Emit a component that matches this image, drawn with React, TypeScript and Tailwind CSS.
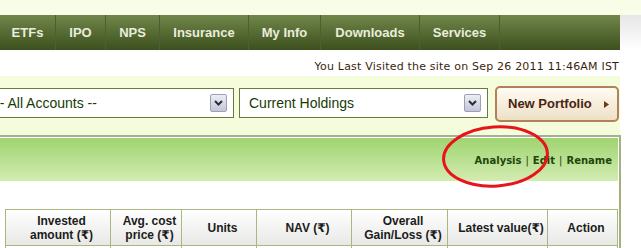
const navItems: { label: string; w: string }[] = [
  { label: "ETFs", w: "w-[56px]" },
  { label: "IPO", w: "w-[50px]" },
  { label: "NPS", w: "w-[54px]" },
  { label: "Insurance", w: "w-[89px]" },
  { label: "My Info", w: "w-[72px]" },
  { label: "Downloads", w: "w-[99px]" },
  { label: "Services", w: "w-[80px]" },
];

const columns: { w: string; lines: string[] }[] = [
  { w: "w-[105px]", lines: ["Invested", "amount (₹)"] },
  { w: "w-[71px]", lines: ["Avg. cost", "price (₹)"] },
  { w: "w-[75px]", lines: ["Units"] },
  { w: "w-[95px]", lines: ["NAV (₹)"] },
  { w: "w-[96px]", lines: ["Overall", "Gain/Loss (₹)"] },
  { w: "w-[100px]", lines: ["Latest value(₹)"] },
  { w: "w-[70px]", lines: ["Action"] },
];

function SelectArrow() {
  return (
    <span className="w-[17px] h-[18px] rounded-[2px] border border-[#9c9fb6] bg-gradient-to-b from-[#eceef5] to-[#c4c6d8] flex items-center justify-center">
      <svg width="9" height="6" viewBox="0 0 9 6">
        <polyline points="1,1 4.5,4.5 8,1" fill="none" stroke="#2d2d3a" strokeWidth="2" />
      </svg>
    </span>
  );
}

function FakeSelect({ label, className }: { label: string; className: string }) {
  return (
    <div
      className={`${className} shrink-0 h-[30px] mt-[2px] bg-white border border-[#6b7a3c] flex items-center justify-between pl-[9px] pr-[6px] text-[14px] text-[#173b05] font-['Liberation_Sans',Arial,sans-serif]`}
    >
      <span className="whitespace-nowrap">{label}</span>
      <SelectArrow />
    </div>
  );
}

export default function App() {
  return (
    <div className="relative w-[641px] h-[248px] overflow-hidden bg-white font-['Liberation_Sans',Arial,sans-serif]">
      <div className="h-[15px] bg-[#f8fde8]" />

      <div className="flex">
        <nav className="w-[620px] h-[35px] flex bg-gradient-to-b from-[#71874a] to-[#3d501e]">
          {navItems.map((item) => (
            <div
              key={item.label}
              className={`${item.w} shrink-0 h-full flex items-center justify-center border-r border-[#4c5f2d] text-[13px] font-bold text-[#e9eddd] whitespace-nowrap`}
            >
              {item.label}
            </div>
          ))}
        </nav>
        <div className="flex-1 h-[35px] bg-gradient-to-b from-[#e6e6e6] to-white" />
      </div>

      <div className="w-[620px] h-[26px] pt-[10px] pr-[1px] text-right text-[11px] leading-[13px] tracking-[0.2px] text-[#3b1f10] font-['DejaVu_Sans',Verdana,sans-serif]">
        You Last Visited the site on Sep 26 2011 11:46AM IST
      </div>

      <div className="w-[620px] h-[59px] bg-[#f5fcdc] flex items-start pt-[10px] overflow-hidden">
        <FakeSelect label="-- All Accounts --" className="w-[249px] ml-[-15px]" />
        <FakeSelect label="Current Holdings" className="w-[249px] ml-[5px]" />
        <button className="shrink-0 ml-[7px] w-[124px] h-[36px] rounded-[5px] border-2 border-[#b3805a] bg-gradient-to-b from-[#fffcf3] to-[#ede0c6] flex items-center pl-[11px] pr-[8px] text-[13px] font-bold text-[#4a2411]">
          <span className="whitespace-nowrap">New Portfolio</span>
          <svg className="ml-auto" width="5" height="7" viewBox="0 0 5 7">
            <polygon points="0,0 5,3.5 0,7" fill="#6b3b20" />
          </svg>
        </button>
      </div>

      <div className="w-[621px] border-t-2 border-r-2 border-t-[#a8ad98] border-r-[#a3b27a] pt-[1px] pr-[1px]">
        <div className="h-[43px] bg-gradient-to-b from-[#9fd46f] to-[#d3ecb1] flex items-center justify-end pt-[2px] pr-[6px] text-[10px] text-[#1d470b] font-['DejaVu_Sans',Verdana,sans-serif]">
          <span className="font-bold">Analysis</span>
          <span className="px-[4px]">|</span>
          <span className="font-bold">Edit</span>
          <span className="px-[4px]">|</span>
          <span className="font-bold">Rename</span>
        </div>

        <div className="h-[28px]" />

        <div className="ml-[5px] border-l border-t border-[#a9b882] font-['Liberation_Sans','DejaVu_Sans',sans-serif]">
          <div className="flex border-b border-[#a9b882] bg-gradient-to-b from-white to-[#e8e8e6]">
            {columns.map((c) => (
              <div
                key={c.lines.join(" ")}
                className={`${c.w} h-[35px] border-r border-[#a9b882] flex flex-col items-center justify-center pl-[7px] text-[12px] leading-[14px] font-bold text-[#1c1c1c] whitespace-nowrap`}
              >
                {c.lines.map((l) => (
                  <span key={l}>{l}</span>
                ))}
              </div>
            ))}
          </div>
          <div className="flex">
            {columns.map((c) => (
              <div key={c.lines.join(" ")} className={`${c.w} h-[24px] border-r border-[#a9b882]`} />
            ))}
          </div>
        </div>
      </div>

      <svg className="absolute left-0 top-0 pointer-events-none" width="641" height="248">
        <ellipse
          cx="495.5"
          cy="156.5"
          rx="52"
          ry="29.5"
          transform="rotate(-4 495.5 156.5)"
          fill="none"
          stroke="#e8131b"
          strokeWidth="3"
        />
      </svg>
    </div>
  );
}
